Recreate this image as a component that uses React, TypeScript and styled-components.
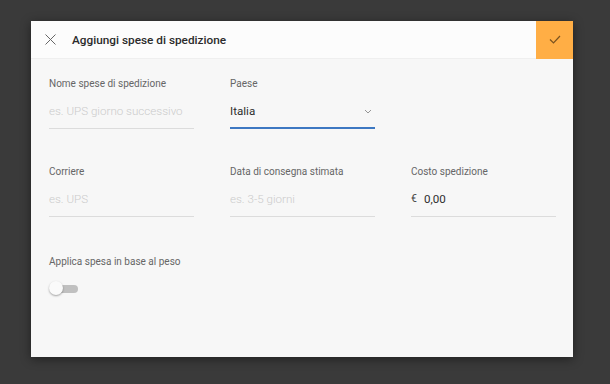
import { createGlobalStyle } from "styled-components";
import styled from "styled-components";

const GlobalStyle = createGlobalStyle`
  html, body {
    margin: 0;
    padding: 0;
    background: #3b3b3b;
    font-family: Roboto, "Liberation Sans", Arial, sans-serif;
  }
`;

/* ── 배경 + 모달 ── */
const Backdrop = styled.div`
  width: 610px;
  height: 384px;
  box-sizing: border-box;
  padding: 21px 0 0 31px;
  background: #3a3a3a;
`;

const Modal = styled.div`
  width: 542px;
  height: 336px;
  background: #f7f7f7;
  box-shadow: 0 2px 10px rgba(0, 0, 0, 0.45);
  display: flex;
  flex-direction: column;
`;

const Header = styled.div`
  height: 38px;
  display: flex;
  align-items: center;
  background: #fcfcfc;
  border-bottom: 1px solid #efefef;
  box-sizing: border-box;
`;

const CloseButton = styled.div`
  width: 38px;
  height: 38px;
  display: flex;
  align-items: center;
  justify-content: center;
`;

const Title = styled.h1`
  flex: 1;
  margin: 0 0 0 3px;
  font-size: 11.8px;
  font-weight: 500;
  color: #2b2b2b;
`;

const ConfirmButton = styled.div`
  width: 37px;
  height: 38px;
  background: #ffae45;
  display: flex;
  align-items: center;
  justify-content: center;
`;

/* ── 폼 ── */
const Body = styled.div`
  padding: 19px 18px 0 18px;
  display: flex;
  flex-direction: column;
  gap: 37px;
`;

const Row = styled.div`
  display: grid;
  grid-template-columns: repeat(3, 145px);
  column-gap: 36px;
`;

const Field = styled.div`
  display: flex;
  flex-direction: column;
`;

const Label = styled.label`
  font-size: 10px;
  line-height: 12px;
  color: #666;
  margin-bottom: 12px;
`;

const InputBox = styled.div<{ active?: boolean }>`
  height: 18px;
  padding-bottom: ${({ active }) => (active ? "7px" : "8px")};
  border-bottom: ${({ active }) => (active ? "2px solid #3d78c2" : "1px solid #dcdcdc")};
  display: flex;
  align-items: center;
  gap: 7px;
  font-size: 11.6px;
  line-height: 18px;
  white-space: nowrap;
  overflow: hidden;
`;

const Placeholder = styled.span`
  color: #cbcbcb;
  font-weight: 300;
`;

const Value = styled.span`
  color: #2e2e2e;
  flex: 1;
`;

const Currency = styled.span`
  color: #444;
  font-size: 10.5px;
`;

const ToggleField = styled.div`
  display: flex;
  flex-direction: column;
  margin-top: 2px;
`;

const Switch = styled.div`
  position: relative;
  width: 29px;
  height: 15px;
  margin-top: 1px;
`;

const Track = styled.div`
  position: absolute;
  left: 3px;
  right: 0;
  top: 4px;
  height: 8px;
  border-radius: 4px;
  background: #c0c0c0;
`;

const Thumb = styled.div`
  position: absolute;
  left: 0;
  top: 0;
  width: 14px;
  height: 14px;
  border-radius: 50%;
  background: #fafafa;
  box-shadow: 0 1px 2px rgba(0, 0, 0, 0.35);
`;

const Chevron = () => (
  <svg width="8" height="5" viewBox="0 0 8 5" style={{ marginRight: 3 }}>
    <path d="M1 1l3 3 3-3" stroke="#8a8a8a" strokeWidth="0.9" fill="none" />
  </svg>
);

const App = () => {
  return (
    <>
      <GlobalStyle />
      <Backdrop>
        <Modal>
          <Header>
            <CloseButton>
              <svg width="11" height="11" viewBox="0 0 11 11">
                <path d="M0.5 0.5l10 10M10.5 0.5l-10 10" stroke="#666" strokeWidth="1" />
              </svg>
            </CloseButton>
            <Title>Aggiungi spese di spedizione</Title>
            <ConfirmButton>
              <svg width="12" height="9" viewBox="0 0 12 9">
                <path d="M1 4.5l3.5 3.5L11 1" stroke="#7a5320" strokeWidth="1.2" fill="none" />
              </svg>
            </ConfirmButton>
          </Header>

          <Body>
            <Row>
              <Field>
                <Label>Nome spese di spedizione</Label>
                <InputBox>
                  <Placeholder>es. UPS giorno successivo</Placeholder>
                </InputBox>
              </Field>
              <Field>
                <Label>Paese</Label>
                <InputBox active>
                  <Value>Italia</Value>
                  <Chevron />
                </InputBox>
              </Field>
            </Row>

            <Row>
              <Field>
                <Label>Corriere</Label>
                <InputBox>
                  <Placeholder>es. UPS</Placeholder>
                </InputBox>
              </Field>
              <Field>
                <Label>Data di consegna stimata</Label>
                <InputBox>
                  <Placeholder>es. 3-5 giorni</Placeholder>
                </InputBox>
              </Field>
              <Field>
                <Label>Costo spedizione</Label>
                <InputBox>
                  <Currency>€</Currency>
                  <Value>0,00</Value>
                </InputBox>
              </Field>
            </Row>

            <ToggleField>
              <Label>Applica spesa in base al peso</Label>
              <Switch>
                <Track />
                <Thumb />
              </Switch>
            </ToggleField>
          </Body>
        </Modal>
      </Backdrop>
    </>
  );
};

export default App;
